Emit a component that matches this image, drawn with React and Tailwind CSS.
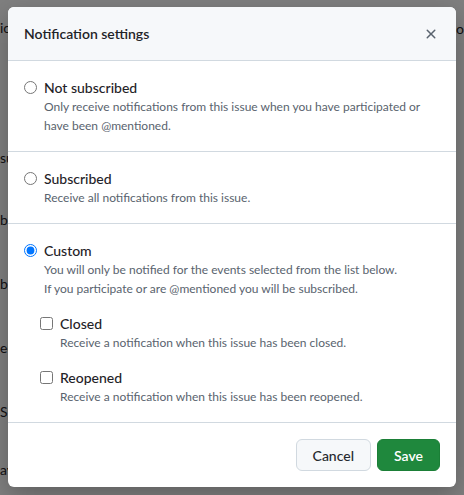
import { useState } from 'react';

const sections = [
  {
    id: 'none',
    label: 'Not subscribed',
    lines: [
      'Only receive notifications from this issue when you have participated or',
      'have been @mentioned.',
    ],
  },
  {
    id: 'all',
    label: 'Subscribed',
    lines: ['Receive all notifications from this issue.'],
  },
  {
    id: 'custom',
    label: 'Custom',
    lines: [
      'You will only be notified for the events selected from the list below.',
      'If you participate or are @mentioned you will be subscribed.',
    ],
  },
];

const events = [
  { id: 'closed', label: 'Closed', desc: 'Receive a notification when this issue has been closed.' },
  { id: 'reopened', label: 'Reopened', desc: 'Receive a notification when this issue has been reopened.' },
];

// bits of the issue page that peek out from behind the dialog
const pageBits = [
  { text: 'ic', cls: 'mt-[19px]' },
  { text: 'su', cls: 'mt-[112px]' },
  { text: 'b', cls: 'mt-[44px]' },
  { text: 'b', cls: 'mt-[46px]' },
  { text: 'ee', cls: 'mt-[46px]' },
  { text: 'S', cls: 'mt-[46px]' },
  { text: 'ay', cls: 'mt-[40px]' },
];

export default function App() {
  const [mode, setMode] = useState('custom');
  const [checked, setChecked] = useState({});

  return (
    <div
      className="relative h-[495px] w-[464px] overflow-hidden bg-white"
      style={{ fontFamily: 'Lato, "Noto Sans", sans-serif' }}
    >
      {/* Page behind */}
      <div className="flex justify-between">
        <div className="flex flex-col items-start text-[14px] leading-[18px] text-[#1f2328]">
          {pageBits.map((b, i) => (
            <span key={i} className={`${b.cls} whitespace-nowrap`}>{b.text}</span>
          ))}
        </div>
        <div className="mt-[20px] text-[14px] leading-[18px] text-[#1f2328]">o</div>
      </div>

      {/* Backdrop */}
      <div className="absolute inset-0 bg-black/50" />

      {/* Dialog */}
      <div className="absolute left-[8px] top-[7px] flex w-[448px] flex-col overflow-hidden rounded-[6px] bg-white shadow-[0_8px_24px_rgba(0,0,0,0.25)]">
        <div className="flex h-[54px] items-center justify-between border-b border-[#d1d9e0] bg-[#f6f8fa] pl-4 pr-[13px]">
          <h2 className="text-[14px] font-semibold text-[#1f2328]">Notification settings</h2>
          <button className="flex h-6 w-6 items-center justify-center text-[#59636e]">
            <svg width="16" height="16" viewBox="0 0 16 16" fill="currentColor">
              <path d="M3.72 3.72a.75.75 0 0 1 1.06 0L8 6.94l3.22-3.220a.749.749 0 0 1 1.275.326.749.749 0 0 1-.215.734L9.06 8l3.22 3.22a.749.749 0 0 1-.326 1.275.749.749 0 0 1-.734-.215L8 9.06l-3.22 3.22a.751.751 0 0 1-1.042-.018.751.751 0 0 1-.018-1.042L6.94 8 3.72 4.78a.75.75 0 0 1 0-1.06Z" />
            </svg>
          </button>
        </div>

        {sections.map((s) => (
          <div key={s.id} className="border-b border-[#d1d9e0] px-4 py-4">
            <label className="flex h-5 items-center gap-[7px] text-[14px] font-medium text-[#1f2328]">
              <input
                type="radio"
                name="mode"
                className="m-0 h-[13px] w-[13px]"
                checked={mode === s.id}
                onChange={() => setMode(s.id)}
              />
              {s.label}
            </label>
            <div className="pl-[20px] text-[12px] leading-[19px] text-[#59636e]">
              {s.lines.map((l) => (
                <div key={l}>{l}</div>
              ))}
            </div>

            {s.id === 'custom' && (
              <div className="flex flex-col gap-[15px] pl-4 pt-[15px]">
                {events.map((e) => (
                  <div key={e.id}>
                    <label className="flex h-5 items-center gap-[7px] text-[14px] font-medium text-[#1f2328]">
                      <input
                        type="checkbox"
                        className="m-0 h-[13px] w-[13px]"
                        checked={!!checked[e.id]}
                        onChange={() => setChecked({ ...checked, [e.id]: !checked[e.id] })}
                      />
                      {e.label}
                    </label>
                    <div className="pl-[20px] text-[12px] leading-[19px] text-[#59636e]">{e.desc}</div>
                  </div>
                ))}
              </div>
            )}
          </div>
        ))}

        <div className="flex justify-end gap-[6px] p-4">
          <button className="h-8 rounded-md border border-[#d1d9e0] bg-[#f6f8fa] px-4 text-[14px] font-medium text-[#25292e]">
            Cancel
          </button>
          <button className="h-8 rounded-md border border-[#1b7f37] bg-[#1f883d] px-4 text-[14px] font-semibold text-white">
            Save
          </button>
        </div>
      </div>
    </div>
  );
}
